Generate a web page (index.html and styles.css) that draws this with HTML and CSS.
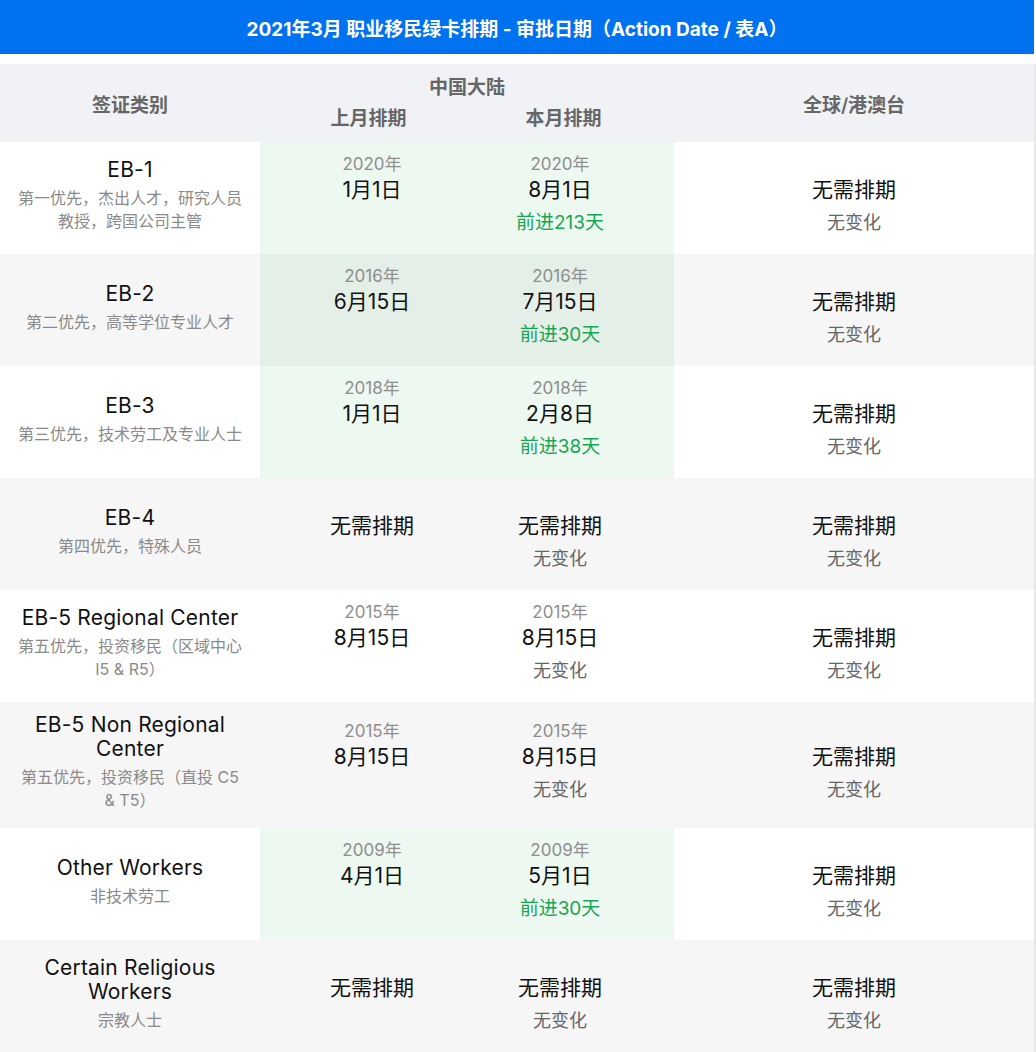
FILE: index.html
```html
<!DOCTYPE html>
<html lang="zh-CN">
<head>
<meta charset="utf-8">
<title>2021年3月 职业移民绿卡排期</title>
<link rel="stylesheet" href="styles.css">
</head>
<body>
<div class="page">
  <div class="titlebar">2021年3月 职业移民绿卡排期 - 审批日期（Action Date / 表A）</div>
  <div class="table">
    <div class="thead">
      <div class="th">签证类别</div>
      <div class="th cn">
        <div class="cn-title">中国大陆</div>
        <div class="cn-subs"><span class="sub-prev">上月排期</span><span class="sub-cur">本月排期</span></div>
      </div>
      <div class="th">全球/港澳台</div>
    </div>
    <div class="rows">
      <div class="row">
        <div class="cell cat"><div class="name">EB-1</div><div class="desc">第一优先，杰出人才，研究人员<br>教授，跨国公司主管</div></div>
        <div class="cell val prev adv"><div class="yr">2020年</div><div class="main">1月1日</div><div class="sub"></div></div>
        <div class="cell val cur adv"><div class="yr">2020年</div><div class="main">8月1日</div><div class="sub up">前进213天</div></div>
        <div class="cell val"><div class="yr"></div><div class="main">无需排期</div><div class="sub">无变化</div></div>
      </div>
      <div class="row">
        <div class="cell cat"><div class="name">EB-2</div><div class="desc">第二优先，高等学位专业人才</div></div>
        <div class="cell val prev adv"><div class="yr">2016年</div><div class="main">6月15日</div><div class="sub"></div></div>
        <div class="cell val cur adv"><div class="yr">2016年</div><div class="main">7月15日</div><div class="sub up">前进30天</div></div>
        <div class="cell val"><div class="yr"></div><div class="main">无需排期</div><div class="sub">无变化</div></div>
      </div>
      <div class="row">
        <div class="cell cat"><div class="name">EB-3</div><div class="desc">第三优先，技术劳工及专业人士</div></div>
        <div class="cell val prev adv"><div class="yr">2018年</div><div class="main">1月1日</div><div class="sub"></div></div>
        <div class="cell val cur adv"><div class="yr">2018年</div><div class="main">2月8日</div><div class="sub up">前进38天</div></div>
        <div class="cell val"><div class="yr"></div><div class="main">无需排期</div><div class="sub">无变化</div></div>
      </div>
      <div class="row">
        <div class="cell cat"><div class="name">EB-4</div><div class="desc">第四优先，特殊人员</div></div>
        <div class="cell val prev"><div class="yr"></div><div class="main">无需排期</div><div class="sub"></div></div>
        <div class="cell val cur"><div class="yr"></div><div class="main">无需排期</div><div class="sub">无变化</div></div>
        <div class="cell val"><div class="yr"></div><div class="main">无需排期</div><div class="sub">无变化</div></div>
      </div>
      <div class="row">
        <div class="cell cat"><div class="name">EB-5 Regional Center</div><div class="desc">第五优先，投资移民（区域中心<br>I5 &amp; R5）</div></div>
        <div class="cell val prev"><div class="yr">2015年</div><div class="main">8月15日</div><div class="sub"></div></div>
        <div class="cell val cur"><div class="yr">2015年</div><div class="main">8月15日</div><div class="sub">无变化</div></div>
        <div class="cell val"><div class="yr"></div><div class="main">无需排期</div><div class="sub">无变化</div></div>
      </div>
      <div class="row">
        <div class="cell cat"><div class="name">EB-5 Non Regional<br>Center</div><div class="desc">第五优先，投资移民（直投 C5<br>&amp; T5）</div></div>
        <div class="cell val prev"><div class="yr">2015年</div><div class="main">8月15日</div><div class="sub"></div></div>
        <div class="cell val cur"><div class="yr">2015年</div><div class="main">8月15日</div><div class="sub">无变化</div></div>
        <div class="cell val"><div class="yr"></div><div class="main">无需排期</div><div class="sub">无变化</div></div>
      </div>
      <div class="row">
        <div class="cell cat"><div class="name">Other Workers</div><div class="desc">非技术劳工</div></div>
        <div class="cell val prev adv"><div class="yr">2009年</div><div class="main">4月1日</div><div class="sub"></div></div>
        <div class="cell val cur adv"><div class="yr">2009年</div><div class="main">5月1日</div><div class="sub up">前进30天</div></div>
        <div class="cell val"><div class="yr"></div><div class="main">无需排期</div><div class="sub">无变化</div></div>
      </div>
      <div class="row">
        <div class="cell cat"><div class="name">Certain Religious<br>Workers</div><div class="desc">宗教人士</div></div>
        <div class="cell val prev"><div class="yr"></div><div class="main">无需排期</div><div class="sub"></div></div>
        <div class="cell val cur"><div class="yr"></div><div class="main">无需排期</div><div class="sub">无变化</div></div>
        <div class="cell val"><div class="yr"></div><div class="main">无需排期</div><div class="sub">无变化</div></div>
      </div>
    </div>
  </div>
</div>
</body>
</html>
```

FILE: styles.css
```css
* { box-sizing: border-box; }

body {
  margin: 0;
  background: #ffffff;
  font-family: Inter, "Noto Sans CJK SC", sans-serif;
  color: #111111;
}

.page {
  width: 1036px;
}

.titlebar {
  height: 54px;
  margin-right: 2px;
  background: #0071ef;
  color: #ffffff;
  font-size: 19px;
  font-weight: 700;
  display: flex;
  align-items: center;
  justify-content: center;
}

.table {
  margin-top: 10px;
  border-right: 2px solid #e8e8e8;
}

.thead {
  display: grid;
  grid-template-columns: 260px 414px 1fr;
  height: 78px;
  background: #f0f2f5;
  color: #666666;
  font-size: 19px;
  font-weight: 600;
}

.th {
  display: flex;
  align-items: center;
  justify-content: center;
}

.cn {
  flex-direction: column;
  align-items: stretch;
}

.cn-title {
  line-height: 31px;
  text-align: center;
}

.cn-subs {
  display: grid;
  grid-template-columns: 207px 207px;
  line-height: 31px;
  text-align: center;
}

.sub-prev { padding-left: 10px; }
.sub-cur { padding-right: 14px; }

.row {
  display: grid;
  grid-template-columns: 260px 207px 207px 1fr;
  min-height: 112px;
  background: #ffffff;
}

.row:nth-child(even) {
  background: #f6f6f6;
}

.cell {
  display: flex;
  flex-direction: column;
  justify-content: center;
  align-items: center;
  text-align: center;
}

.cat {
  padding: 11px 8px 16px;
}

.name {
  font-size: 21px;
  line-height: 24px;
  color: #111111;
  letter-spacing: 0.2px;
}

.desc {
  margin-top: 5px;
  font-size: 16px;
  line-height: 23px;
  color: #8a8a8a;
}

.val {
  padding-bottom: 6px;
}

.prev { padding-left: 17px; }
.cur { padding-right: 21px; }

.adv {
  background: rgba(25, 160, 80, 0.08);
}

.yr {
  height: 24px;
  line-height: 24px;
  font-size: 17px;
  color: #8e8e8e;
}

.main {
  height: 30px;
  line-height: 28px;
  font-size: 21px;
  color: #111111;
}

.sub {
  height: 32px;
  line-height: 34px;
  font-size: 18px;
  color: #666666;
}

.sub.up {
  font-size: 19px;
  color: #17a652;
}
```
